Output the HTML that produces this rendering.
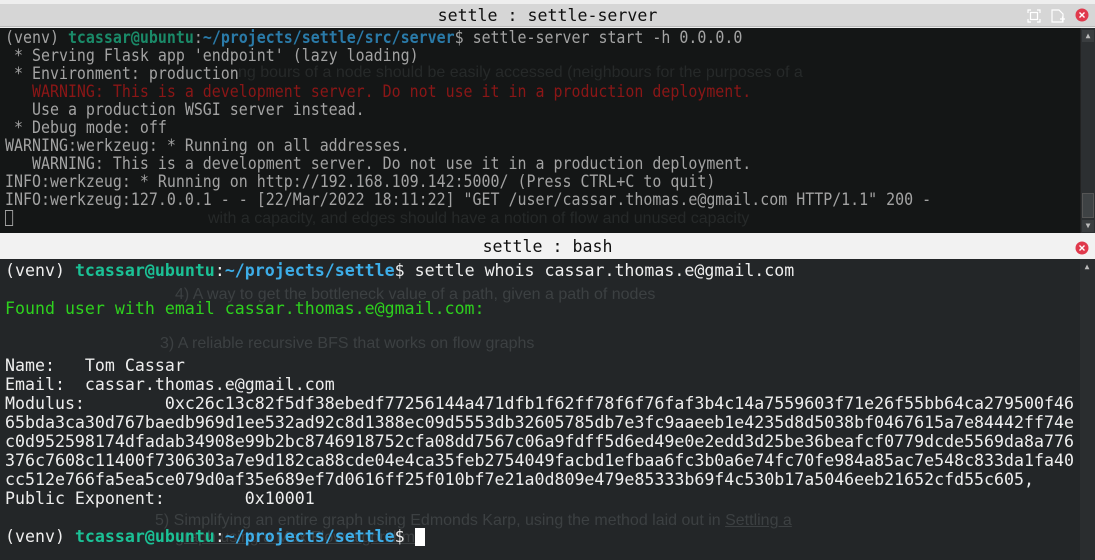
<!DOCTYPE html>
<html><head><meta charset="utf-8"><style>
*{margin:0;padding:0;box-sizing:border-box}
body{width:1095px;height:560px;overflow:hidden;background:#eeeeee;position:relative;font-family:"DejaVu Sans Mono","Liberation Mono",monospace}
.tb{position:absolute;left:0;width:1095px;font-size:16.6px;text-align:center;color:#111}
.term{position:absolute;left:0;width:1095px;overflow:hidden}
.lines{position:absolute;left:5px;white-space:pre;font-size:16.6px}
.ghost{position:absolute;white-space:pre;font-family:"Liberation Sans",sans-serif;font-size:16px}
.sb{position:absolute;right:0;width:15px;background:#2f3335}
</style></head><body>
<div class="tb" style="top:4px;height:23px;line-height:23px;background:#d6d6d6;border-bottom:1px solid #bbb">settle : settle-server</div>
<svg style="position:absolute;left:1027px;top:9px" width="14" height="14"><path d="M1 4V1H4M10 1H13V4M13 10V13H10M4 13H1V10" stroke="#fff" fill="none" stroke-width="1.2"/><rect x="3.5" y="3.5" width="7" height="7" stroke="#fff" fill="none" stroke-width="1.2"/></svg>
<svg style="position:absolute;left:1051px;top:9px" width="14" height="14"><path d="M1 1H8L12 5V13H1Z" stroke="#fff" fill="none" stroke-width="1.2"/><path d="M9 10H14M11.5 7.5V12.5" stroke="#fff" stroke-width="1.2"/></svg>
<svg style="position:absolute;left:1075px;top:8px" width="14" height="14"><circle cx="7" cy="7" r="6.5" fill="#e0394c"/><path d="M4.5 4.5L9.5 9.5M9.5 4.5L4.5 9.5" stroke="#fff" stroke-width="1.4"/></svg>
<div class="term" style="top:28px;height:205px;background:#141616">
<div class="ghost" style="color:#262929;left:238px;top:36px">ng bours of a node should be easily accessed (neighbours for the purposes of a</div>
<div class="ghost" style="color:#262929;left:208px;top:182px">with a capacity, and edges should have a notion of flow and unused capacity</div>
<div class="lines" style="top:1px;line-height:18px;color:#a3a3a3;transform:scaleX(0.9);transform-origin:0 0">(venv) <span style="color:#1a8a68;font-weight:bold">tcassar@ubuntu</span>:<span style="color:#2a7aa8;font-weight:bold">~/projects/settle/src/server</span>$ settle-server start -h 0.0.0.0
 * Serving Flask app 'endpoint' (lazy loading)
 * Environment: production
<span style="color:#8b1616">   WARNING: This is a development server. Do not use it in a production deployment.</span>
   Use a production WSGI server instead.
 * Debug mode: off
WARNING:werkzeug: * Running on all addresses.
   WARNING: This is a development server. Do not use it in a production deployment.
INFO:werkzeug: * Running on http://192.168.109.142:5000/ (Press CTRL+C to quit)
INFO:werkzeug:127.0.0.1 - - [22/Mar/2022 18:11:22] "GET /user/cassar.thomas.e@gmail.com HTTP/1.1" 200 -
<span style="display:inline-block;width:9px;height:16px;border:1px solid #a3a3a3;vertical-align:-3px"></span></div>
<div class="sb" style="top:0;height:205px;background:#2c2f31;border-left:1px solid #222"><div style="position:absolute;top:2px;left:1px;width:12px;height:12px;background:#3a3d3f;color:#bbb;font-size:8px;text-align:center;line-height:12px">▲</div><div style="position:absolute;top:165px;left:1px;width:12px;height:25px;background:#3e4244;border:1px solid #555"></div><div style="position:absolute;top:192px;left:1px;width:12px;height:12px;background:#3a3d3f;color:#bbb;font-size:8px;text-align:center;line-height:12px">▼</div></div>
</div>
<div class="tb" style="top:233px;height:26px;line-height:28px;background:#f2f2f2">settle : bash</div>
<svg style="position:absolute;left:1075px;top:241px" width="14" height="14"><circle cx="7" cy="7" r="6.5" fill="#e0394c"/><path d="M4.5 4.5L9.5 9.5M9.5 4.5L4.5 9.5" stroke="#fff" stroke-width="1.4"/></svg>
<div class="term" style="top:259px;height:301px;background:#232628">
<div class="ghost" style="color:#3c4042;left:175px;top:27px">4) A way to get the bottleneck value of a path, given a path of nodes</div>
<div class="ghost" style="color:#3c4042;left:160px;top:76px">3) A reliable recursive BFS that works on flow graphs</div>
<div class="ghost" style="color:#3c4042;left:155px;top:253px">5) Simplifying an entire graph using Edmonds Karp, using the method laid out in <u>Settling a</u></div>
<div class="ghost" style="color:#3c4042;left:175px;top:270px"><u>graph using a Max Flow algorithm</u>.</div>
<div class="lines" style="top:2px;line-height:19px;color:#eeeeee">(venv) <span style="color:#1bc196;font-weight:bold">tcassar@ubuntu</span>:<span style="color:#3daee9;font-weight:bold">~/projects/settle</span>$ settle whois cassar.thomas.e@gmail.com

<span style="color:#2ed11e">Found user with email cassar.thomas.e@gmail.com:</span>


Name:   Tom Cassar
Email:  cassar.thomas.e@gmail.com
Modulus:        0xc26c13c82f5df38ebedf77256144a471dfb1f62ff78f6f76faf3b4c14a7559603f71e26f55bb64ca279500f46
65bda3ca30d767baedb969d1ee532ad92c8d1388ec09d5553db32605785db7e3fc9aaeeb1e4235d8d5038bf0467615a7e84442ff74e
c0d952598174dfadab34908e99b2bc8746918752cfa08dd7567c06a9fdff5d6ed49e0e2edd3d25be36beafcf0779dcde5569da8a776
376c7608c11400f7306303a7e9d182ca88cde04e4ca35feb2754049facbd1efbaa6fc3b0a6e74fc70fe984a85ac7e548c833da1fa40
cc512e766fa5ea5ce079d0af35e689ef7d0616ff25f010bf7e21a0d809e479e85333b69f4c530b17a5046eeb21652cfd55c605,
Public Exponent:        0x10001

(venv) <span style="color:#1bc196;font-weight:bold">tcassar@ubuntu</span>:<span style="color:#3daee9;font-weight:bold">~/projects/settle</span>$ <span style="display:inline-block;width:10px;height:18px;background:#fff;vertical-align:-4px"></span></div>
<div class="sb" style="top:0;height:301px;background:#2a2d2f"><div style="position:absolute;top:2px;left:1px;width:12px;height:12px;color:#bbb;font-size:8px;text-align:center;line-height:12px">▲</div></div>
</div>
</body></html>
